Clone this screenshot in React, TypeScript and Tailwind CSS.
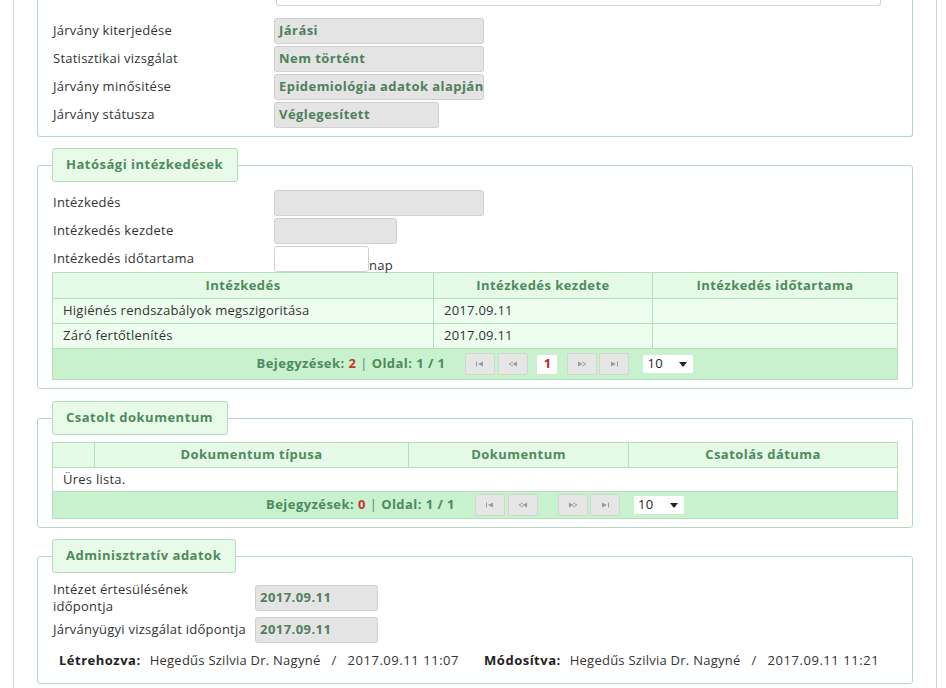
import React from "react";

const green = "text-[#4d8a5c]";

function Field({ value, w }: { value?: string; w: string }) {
    return (
        <div className={`h-[26px] ${w} rounded-[3px] border border-[#cfcfcf] bg-[#e4e4e4] px-[4px] flex items-center font-bold text-[#4f7f5c] overflow-hidden whitespace-nowrap tracking-[0.45px]`}>
            {value}
        </div>
    );
}

function Legend({ children }: { children: React.ReactNode }) {
    return (
        <legend className="h-[34px] pl-[13px] pr-[14px] flex items-center rounded-[3px] border border-[#b3dcbc] bg-[#e8fbe9] font-bold text-[#4d8a5c] tracking-[0.5px]">
            {children}
        </legend>
    );
}

function Glyph({ kind }: { kind: "first" | "prev" | "next" | "last" }) {
    const c = "#9a9a9a";
    return (
        <svg width="10" height="6" viewBox="0 0 10 6">
            {kind === "first" && (
                <>
                    <rect x="1" y="0.5" width="1" height="5" fill={c} />
                    <path d="M8 0.5 L3 3 L8 5.5 Z" fill={c} />
                </>
            )}
            {kind === "prev" && (
                <>
                    <path d="M5 0.8 L1 3 L5 5.2" fill="none" stroke={c} strokeWidth="0.9" />
                    <path d="M9 0.5 L4.5 3 L9 5.5 Z" fill={c} />
                </>
            )}
            {kind === "next" && (
                <>
                    <path d="M1 0.5 L5.5 3 L1 5.5 Z" fill={c} />
                    <path d="M5 0.8 L9 3 L5 5.2" fill="none" stroke={c} strokeWidth="0.9" />
                </>
            )}
            {kind === "last" && (
                <>
                    <path d="M2 0.5 L7 3 L2 5.5 Z" fill={c} />
                    <rect x="8" y="0.5" width="1" height="5" fill={c} />
                </>
            )}
        </svg>
    );
}

function PagerButton({ kind, cls = "" }: { kind: "first" | "prev" | "next" | "last"; cls?: string }) {
    return (
        <div className={`w-[30px] h-[22px] rounded-[2px] border border-[#cfd8cf] bg-[#e6e6e6] flex items-center justify-center ${cls}`}>
            <Glyph kind={kind} />
        </div>
    );
}

function Pager({ count, withPage, h }: { count: number; withPage: boolean; h: string }) {
    return (
        <div className={`${h} bg-[#c8f2ce] flex items-center justify-center`}>
            <span className={`font-bold ${green} tracking-[0.45px]`}>
                Bejegyzések: <span className="text-[#d0312d]">{count}</span>
                <span className="font-normal"> | </span>Oldal: 1 / 1
            </span>
            <div className="flex items-center ml-[20px]">
                <PagerButton kind="first" />
                <PagerButton kind="prev" cls="ml-[3px]" />
                {withPage ? (
                    <div className="ml-[8px] w-[22px] h-[21px] rounded-[2px] border border-[#d6e6d6] bg-white flex items-center justify-center font-bold text-[#c0282a]">
                        1
                    </div>
                ) : (
                    <div className="w-[11px]" />
                )}
                <PagerButton kind="next" cls="ml-[9px]" />
                <PagerButton kind="last" cls="ml-[2px]" />
            </div>
            <div className="ml-[14px] w-[50px] h-[18px] bg-white flex items-center justify-between pl-[4px] pr-[6px] text-[#222]">
                <span>10</span>
                <svg width="8" height="5" viewBox="0 0 8 5">
                    <path d="M0 0 L8 0 L4 5 Z" fill="#222" />
                </svg>
            </div>
        </div>
    );
}

export default function App() {
    const rows = [
        ["Higiénés rendszabályok megszigoritása", "2017.09.11", ""],
        ["Záró fertőtlenítés", "2017.09.11", ""],
    ];

    return (
        <div className="min-h-[688px] bg-white font-['Open_Sans',sans-serif] text-[13px] text-[#333] tracking-[0.25px]">
            <div className="ml-[13px] w-[924px] min-h-[688px] border-x border-[#c3d9c9] px-[23px]">
                {/* first fieldset, top cut off */}
                <div className="border-x border-b border-[#b7d8c0] rounded-b-[3px] px-[14px] pb-[8px]">
                    <div className="ml-[224px] w-[605px] h-[6px] border-x border-b border-[#cfd8d0] rounded-b-[3px]" />
                    <div className="flex flex-col gap-[2px] mt-[12px]">
                        {[
                            ["Járvány kiterjedése", "Járási", "w-[210px]"],
                            ["Statisztikai vizsgálat", "Nem történt", "w-[210px]"],
                            ["Járvány minősitése", "Epidemiológia adatok alapján", "w-[210px]"],
                            ["Járvány státusza", "Véglegesített", "w-[165px]"],
                        ].map(([l, v, w]) => (
                            <div key={l} className="flex items-center h-[26px]">
                                <div className="w-[222px] pl-[1px]">{l}</div>
                                <Field value={v} w={w} />
                            </div>
                        ))}
                    </div>
                </div>

                {/* Hatósági intézkedések */}
                <fieldset className="mt-[11px] border border-[#b7d8c0] rounded-[3px] px-[14px] pb-[8px]">
                    <Legend>Hatósági intézkedések</Legend>
                    <div className="flex flex-col gap-[2px] mt-[8px]">
                        <div className="flex items-center h-[26px]">
                            <div className="w-[222px] pl-[1px]">Intézkedés</div>
                            <Field w="w-[210px]" />
                        </div>
                        <div className="flex items-center h-[26px]">
                            <div className="w-[222px] pl-[1px]">Intézkedés kezdete</div>
                            <Field w="w-[123px]" />
                        </div>
                        <div className="flex items-center h-[26px]">
                            <div className="w-[222px] pl-[1px]">Intézkedés időtartama</div>
                            <div className="h-[26px] w-[95px] rounded-[3px] border border-[#d0d0d0] bg-white" />
                            <span className="self-end leading-[16px] -mb-[1px]">nap</span>
                        </div>
                    </div>
                    <div className="border border-[#b3dfbb]">
                        <div className="grid grid-cols-[380px_219px_1fr] h-[25px] bg-[#e6fae8] font-bold text-[#4d8a5c] tracking-[0.45px]">
                            <div className="flex items-center justify-center">Intézkedés</div>
                            <div className="flex items-center justify-center border-l border-[#b3dfbb]">Intézkedés kezdete</div>
                            <div className="flex items-center justify-center border-l border-[#b3dfbb]">Intézkedés időtartama</div>
                        </div>
                        {rows.map((r) => (
                            <div key={r[0]} className="grid grid-cols-[380px_219px_1fr] h-[25px] bg-[#edfdee] border-t border-[#b3dfbb]">
                                <div className="flex items-center pl-[10px]">{r[0]}</div>
                                <div className="flex items-center pl-[10px] border-l border-[#b3dfbb]">{r[1]}</div>
                                <div className="flex items-center pl-[10px] border-l border-[#b3dfbb]">{r[2]}</div>
                            </div>
                        ))}
                        <div className="border-t border-[#b3dfbb]">
                            <Pager count={2} withPage h="h-[30px]" />
                        </div>
                    </div>
                </fieldset>

                {/* Csatolt dokumentum */}
                <fieldset className="mt-[12px] border border-[#b7d8c0] rounded-[3px] px-[14px] pb-[8px]">
                    <Legend>Csatolt dokumentum</Legend>
                    <div className="mt-[7px] border border-[#b3dfbb]">
                        <div className="grid grid-cols-[41px_314px_220px_1fr] h-[24px] bg-[#e6fae8] font-bold text-[#4d8a5c] tracking-[0.45px]">
                            <div />
                            <div className="flex items-center justify-center border-l border-[#b3dfbb]">Dokumentum típusa</div>
                            <div className="flex items-center justify-center border-l border-[#b3dfbb]">Dokumentum</div>
                            <div className="flex items-center justify-center border-l border-[#b3dfbb]">Csatolás dátuma</div>
                        </div>
                        <div className="h-[24px] flex items-center pl-[10px] bg-white border-t border-[#b3dfbb]">Üres lista.</div>
                        <div className="border-t border-[#b3dfbb]">
                            <Pager count={0} withPage={false} h="h-[26px]" />
                        </div>
                    </div>
                </fieldset>

                {/* Adminisztratív adatok */}
                <fieldset className="mt-[11px] border border-[#b7d8c0] rounded-[3px] px-[14px] pb-[13px]">
                    <Legend>Adminisztratív adatok</Legend>
                    <div className="flex flex-col gap-[2px] mt-[8px]">
                        <div className="flex items-center h-[34px]">
                            <div className="w-[203px] pl-[1px] leading-[17px]">
                                Intézet értesülésének
                                <br />
                                időpontja
                            </div>
                            <Field value="2017.09.11" w="w-[123px]" />
                        </div>
                        <div className="flex items-center h-[26px]">
                            <div className="w-[203px] pl-[1px]">Járványügyi vizsgálat időpontja</div>
                            <Field value="2017.09.11" w="w-[123px]" />
                        </div>
                    </div>
                    <div className="mt-[9px] h-[18px] flex items-center pl-[7px] whitespace-nowrap">
                        <span className="font-bold text-[#222] tracking-[0.5px]">Létrehozva:</span>
                        <span className="ml-[9px]">Hegedűs Szilvia Dr. Nagyné</span>
                        <span className="ml-[11px]">/</span>
                        <span className="ml-[11px] tracking-[0.55px]">2017.09.11 11:07</span>
                        <span className="ml-[25px] font-bold text-[#222] tracking-[0.5px]">Módosítva:</span>
                        <span className="ml-[9px]">Hegedűs Szilvia Dr. Nagyné</span>
                        <span className="ml-[11px]">/</span>
                        <span className="ml-[11px] tracking-[0.55px]">2017.09.11 11:21</span>
                    </div>
                </fieldset>
            </div>
        </div>
    );
}
